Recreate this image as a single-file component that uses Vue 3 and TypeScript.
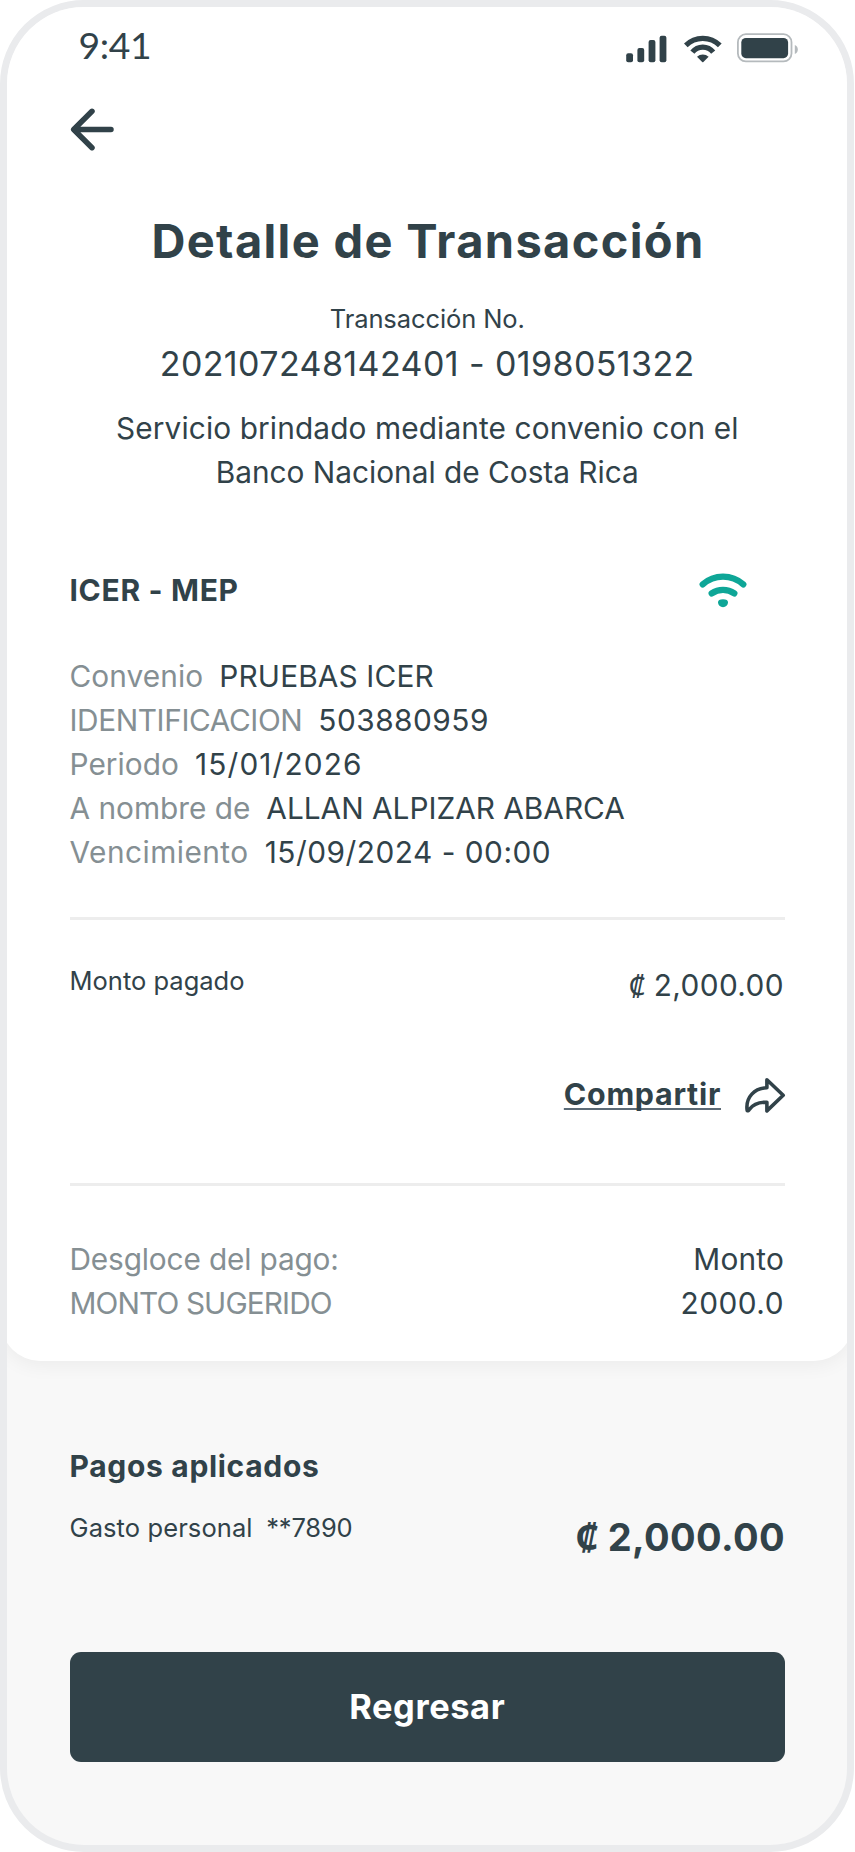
<script setup lang="ts">
interface Detail {
  label: string
  value: string
}

const details: Detail[] = [
  { label: 'Convenio', value: 'PRUEBAS ICER' },
  { label: 'IDENTIFICACION', value: '503880959' },
  { label: 'Periodo', value: '15/01/2026' },
  { label: 'A nombre de', value: 'ALLAN ALPIZAR ABARCA' },
  { label: 'Vencimiento', value: '15/09/2024 - 00:00' },
]

const breakdown: Detail[] = [
  { label: 'Desgloce del pago:', value: 'Monto' },
  { label: 'MONTO SUGERIDO', value: '2000.0' },
]
</script>

<template>
  <main class="phone">
    <section class="card">
      <div class="status">
        <span class="time">9:41</span>
        <div class="indicators">
          <svg width="41" height="40" viewBox="0 0 41 40">
            <rect x="0.2" y="29.2" width="6.8" height="9" rx="2" />
            <rect x="11.4" y="24" width="6.8" height="14.2" rx="2" />
            <rect x="22.6" y="16" width="6.8" height="22.2" rx="2" />
            <rect x="33.6" y="11.8" width="6.8" height="26.4" rx="2" />
          </svg>
          <svg class="status-wifi" width="38" height="40" viewBox="0 0 38 40">
            <g fill="none" stroke="#314249" stroke-width="5.2">
              <path d="M1.8 21.4A23.9 23.9 0 0 1 35.8 21.4" />
              <path d="M8.4 28.2A13.2 13.2 0 0 1 29.2 28.2" />
            </g>
            <path d="M13 32.8A8.5 8.5 0 0 1 24.6 32.8L19.4 37.9Q18.8 38.4 18.2 37.9Z" />
          </svg>
          <svg class="status-battery" width="61" height="40" viewBox="0 0 61 40">
            <rect x="0.9" y="10.2" width="53.6" height="27.2" rx="8" fill="none" stroke="#b5babd" stroke-width="1.8" />
            <rect x="4.3" y="14" width="46.8" height="20.2" rx="4.6" />
            <path d="M57.8 21Q60.8 22.4 60.8 25.5T57.8 30Z" fill="#b5babd" />
          </svg>
        </div>
      </div>

      <svg class="back" width="44" height="44" viewBox="0 0 44 44" role="img" aria-label="Volver">
        <path d="M41 22.5H4M22 4.3L3.7 22.5L22 40.7" />
      </svg>

      <h1>Detalle de Transacción</h1>
      <p class="small tx-label">Transacción No.</p>
      <p class="tx-number">202107248142401 - 0198051322</p>
      <p class="notice">
        <span>Servicio brindado mediante convenio con el</span><br />
        <span>Banco Nacional de Costa Rica</span>
      </p>

      <div class="service">
        <h2>ICER - MEP</h2>
        <svg width="48" height="36" viewBox="0 0 48 36">
          <g fill="none" stroke="#0ea697" stroke-width="6.3" stroke-linecap="round">
            <path d="M3.7 11.4A30.5 30.5 0 0 1 44.3 11.4" />
            <path d="M12.7 20.4A19.5 19.5 0 0 1 35.3 20.4" />
          </g>
          <path d="M19 29.2Q19 26.2 24 26.2T29 29.2A5 5 0 0 1 19 29.2Z" fill="#0ea697" />
        </svg>
      </div>

      <dl class="details">
        <div v-for="item in details" :key="item.label" class="detail">
          <dt>{{ item.label }}</dt>
          <dd>{{ item.value }}</dd>
        </div>
      </dl>

      <hr class="rule-top" />

      <div class="paid">
        <span class="small">Monto pagado</span>
        <span class="amount"><span class="colon">₡</span>2,000.00</span>
      </div>

      <div class="share">
        <a>Compartir</a>
        <svg width="42" height="38" viewBox="0 0 42 38">
          <path d="M22.9 3.7L39.2 19.3L22.9 34.9V26.2C15 26 9 28.4 5.4 33.4Q4.2 35.3 3.2 34.6C1.2 21 11 11.8 22.9 11.8Z" />
        </svg>
      </div>

      <hr class="rule-bottom" />

      <dl class="breakdown">
        <div v-for="item in breakdown" :key="item.label" class="line">
          <dt>{{ item.label }}</dt>
          <dd>{{ item.value }}</dd>
        </div>
      </dl>
    </section>

    <section class="applied">
      <h2>Pagos aplicados</h2>
      <div class="source">
        <span class="small account"><span>Gasto personal</span><span>**7890</span></span>
        <strong class="total"><span class="colon">₡</span>2,000.00</strong>
      </div>
      <button type="button">Regresar</button>
    </section>
  </main>
</template>

<style>
body {
  margin: 0;
  background: #fff;
}
</style>

<style scoped>
.phone {
  box-sizing: border-box;
  width: 854px;
  height: 1852px;
  border: 7px solid #eaebed;
  border-radius: 84px;
  overflow: hidden;
  background: #f8f8f8;
  color: #314249;
  font-family: Inter, Roboto, sans-serif;
  font-size: 29.8px;
  line-height: 44px;
  white-space: nowrap;
}

h1, h2, p, dl, dd {
  margin: 0;
}

svg {
  display: block;
  flex: none;
  fill: #314249;
}

.card {
  box-sizing: border-box;
  height: 1354px;
  margin: 0 -6px;
  padding: 17px 68px 0 68.5px;
  border-radius: 0 0 39px 39px;
  background: #fff;
  box-shadow: 0 4px 20px rgba(0, 0, 0, 0.055);
}

.status {
  display: flex;
  justify-content: space-between;
  height: 40px;
  padding: 0 0 0 9px;
  margin-right: -13px;
}

.time {
  font-family: Lato, sans-serif;
  font-size: 37.3px;
  line-height: 41px;
  letter-spacing: -0.4px;
}

.indicators {
  display: flex;
}

.status-wifi {
  margin-left: 17px;
}

.status-battery {
  margin-left: 15px;
}

.back {
  margin-top: 43px;
  fill: none;
  stroke: #314249;
  stroke-width: 5.5;
  stroke-linecap: round;
  stroke-linejoin: round;
}

h1 {
  margin-top: 62px;
  padding-left: 1.5px;
  font-size: 47px;
  line-height: 56px;
  font-weight: 700;
  letter-spacing: 1.34px;
  text-align: center;
}

.small {
  font-size: 25.5px;
  line-height: 36px;
}

.tx-label {
  margin-top: 31.7px;
  letter-spacing: -0.1px;
  text-align: center;
}

.tx-number {
  margin-top: 5px;
  font-size: 34px;
  letter-spacing: 0.4px;
  text-align: center;
}

.notice {
  margin-top: 20.6px;
  letter-spacing: 0.12px;
  text-align: center;
}

.notice span:last-child {
  letter-spacing: 0;
}

.service {
  display: flex;
  justify-content: space-between;
  align-items: flex-start;
  margin-top: 73.4px;
  padding-right: 38px;
}

.service svg {
  margin-top: 5px;
}

h2 {
  font-size: 30px;
  font-weight: 700;
  letter-spacing: 0.68px;
}

.details {
  margin-top: 42px;
  line-height: 44px;
}

.detail {
  display: flex;
  gap: 16px;
}

dt {
  color: #858f93;
}

.detail:nth-child(1) dt { letter-spacing: 0.1px; }
.detail:nth-child(1) dd { letter-spacing: 0.15px; }
.detail:nth-child(2) dt { letter-spacing: -0.4px; }
.detail:nth-child(2) dd { letter-spacing: 0.5px; }
.detail:nth-child(3) dt { letter-spacing: 0.05px; }
.detail:nth-child(3) dd { letter-spacing: 1.15px; }
.detail:nth-child(5) dt { letter-spacing: 0.48px; }
.detail:nth-child(5) dd { letter-spacing: 0.52px; }

hr {
  height: 3px;
  border: 0;
  margin: 0;
  background: #ededed;
}

.rule-top {
  margin-top: 43.1px;
}

.paid {
  display: flex;
  justify-content: space-between;
  align-items: flex-start;
  margin-top: 43px;
}

.amount {
  padding-right: 1px;
  letter-spacing: 0.4px;
}

.colon {
  margin-right: 8px;
  font-family: "Noto Sans", sans-serif;
  font-size: 28.8px;
  line-height: 1;
}

.share {
  display: flex;
  justify-content: flex-end;
  margin: 65.5px -1px 0 0;
}

.share a {
  font-size: 30.4px;
  font-weight: 700;
  letter-spacing: 0.72px;
  text-decoration: underline;
  text-decoration-color: #5b6a76;
  text-decoration-thickness: 2px;
  text-decoration-skip-ink: none;
  text-underline-offset: 3px;
}

.share svg {
  margin: 4px 0 0 23px;
  fill: none;
  stroke: #314249;
  stroke-width: 3.6;
  stroke-linejoin: round;
}

.rule-bottom {
  margin-top: 66.5px;
}

.breakdown {
  margin-top: 51.2px;
}

.line {
  display: flex;
  justify-content: space-between;
  padding-right: 1px;
}

.line:nth-child(1) dt { letter-spacing: -0.15px; }
.line:nth-child(1) dd { letter-spacing: 0.2px; }
.line:nth-child(2) dt { letter-spacing: -0.88px; }
.line:nth-child(2) dd { letter-spacing: 0.5px; }

.applied {
  padding: 83.2px 62px 0 62.5px;
}

.source {
  display: flex;
  justify-content: space-between;
  align-items: flex-start;
  height: 50.4px;
  margin-top: 21.7px;
}

.account {
  display: flex;
  gap: 13.5px;
  letter-spacing: 0.1px;
}

.account span:last-child {
  letter-spacing: -0.15px;
}

.total {
  margin-top: 3px;
  font-size: 38px;
  line-height: 48px;
  letter-spacing: 0.4px;
}

.total .colon {
  margin-right: 9px;
  font-size: 36.8px;
}

button {
  display: block;
  width: 100%;
  height: 110px;
  margin-top: 91.7px;
  padding: 0;
  border: 0;
  border-radius: 11px;
  background: #314249;
  color: #fff;
  font: 700 34.4px/44px Inter, Roboto, sans-serif;
  letter-spacing: 0.6px;
}
</style>
